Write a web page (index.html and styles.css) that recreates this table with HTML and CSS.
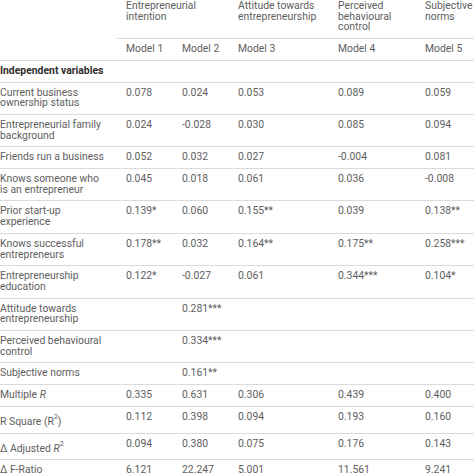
FILE: index.html
```html
<!DOCTYPE html>
<html lang="en">
<head>
<meta charset="utf-8">
<title>Regression table</title>
<link rel="stylesheet" href="styles.css">
</head>
<body>
<table class="reg">
  <colgroup>
    <col class="c-label">
    <col class="c-m1">
    <col class="c-m2">
    <col class="c-m3">
    <col class="c-m4">
    <col class="c-m5">
  </colgroup>
  <thead>
    <tr class="groups">
      <th class="blank"></th>
      <th colspan="2">Entrepreneurial intention</th>
      <th>Attitude towards entrepreneurship</th>
      <th>Perceived behavioural control</th>
      <th>Subjective norms</th>
    </tr>
    <tr class="models">
      <th></th>
      <th>Model 1</th>
      <th>Model 2</th>
      <th>Model 3</th>
      <th>Model 4</th>
      <th>Model 5</th>
    </tr>
  </thead>
  <tbody>
    <tr class="section"><td colspan="6">Independent variables</td></tr>
    <tr><td>Current business ownership status</td><td>0.078</td><td>0.024</td><td>0.053</td><td>0.089</td><td>0.059</td></tr>
    <tr><td>Entrepreneurial family background</td><td>0.024</td><td>-0.028</td><td>0.030</td><td>0.085</td><td>0.094</td></tr>
    <tr><td>Friends run a business</td><td>0.052</td><td>0.032</td><td>0.027</td><td>-0.004</td><td>0.081</td></tr>
    <tr><td>Knows someone who is an entrepreneur</td><td>0.045</td><td>0.018</td><td>0.061</td><td>0.036</td><td>-0.008</td></tr>
    <tr><td>Prior start-up experience</td><td>0.139*</td><td>0.060</td><td>0.155**</td><td>0.039</td><td>0.138**</td></tr>
    <tr><td>Knows successful entrepreneurs</td><td>0.178**</td><td>0.032</td><td>0.164**</td><td>0.175**</td><td>0.258***</td></tr>
    <tr><td>Entrepreneurship education</td><td>0.122*</td><td>-0.027</td><td>0.061</td><td>0.344***</td><td>0.104*</td></tr>
    <tr><td>Attitude towards entrepreneurship</td><td></td><td>0.281***</td><td></td><td></td><td></td></tr>
    <tr><td>Perceived behavioural control</td><td></td><td>0.334***</td><td></td><td></td><td></td></tr>
    <tr><td>Subjective norms</td><td></td><td>0.161**</td><td></td><td></td><td></td></tr>
    <tr><td>Multiple <i>R</i></td><td>0.335</td><td>0.631</td><td>0.306</td><td>0.439</td><td>0.400</td></tr>
    <tr><td>R Square (R<sup>2</sup>)</td><td>0.112</td><td>0.398</td><td>0.094</td><td>0.193</td><td>0.160</td></tr>
    <tr><td>Δ Adjusted <i>R</i><sup>2</sup></td><td>0.094</td><td>0.380</td><td>0.075</td><td>0.176</td><td>0.143</td></tr>
    <tr><td>Δ F-Ratio</td><td>6.121</td><td>22.247</td><td>5.001</td><td>11.561</td><td>9.241</td></tr>
  </tbody>
</table>
</body>
</html>
```

FILE: styles.css
```css
html, body {
  margin: 0;
  padding: 0;
  background: #ffffff;
  overflow: hidden;
}

body {
  font-family: Roboto, "Liberation Sans", sans-serif;
  font-size: 10.4px;
  line-height: 10.7px;
  color: #5e5e5e;
}

.reg {
  border-collapse: collapse;
  table-layout: fixed;
  width: 495px;
  margin-left: -9px;
  margin-top: -4px;
}

.c-label { width: 126px; }
.c-m1 { width: 56px; }
.c-m2 { width: 56px; }
.c-m3 { width: 100px; }
.c-m4 { width: 87px; }
.c-m5 { width: 70px; }

.reg th,
.reg td {
  padding: 5px 9px 5px 9px;
  text-align: left;
  vertical-align: top;
  font-weight: normal;
  border-bottom: 1px solid #dadada;
}

.reg td + td {
  white-space: nowrap;
  padding-right: 0;
}

.reg .groups .blank {
  border-bottom: none;
}

.reg .section td {
  font-weight: bold;
  color: #2e2e2e;
}

.reg sup {
  font-size: 7px;
  line-height: 10px;
  vertical-align: 6px;
}

.reg i {
  font-style: italic;
}
```
